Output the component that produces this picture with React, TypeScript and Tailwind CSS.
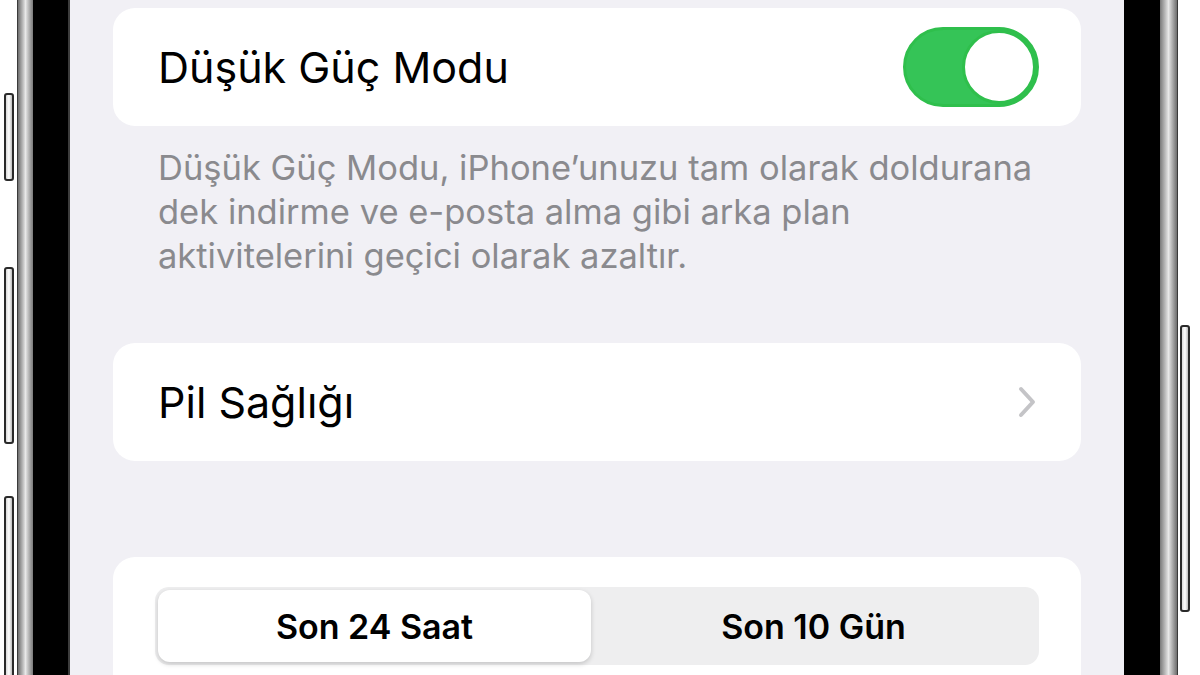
import { useState } from "react";

function SideButton({ className }: { className: string }) {
  return (
    <div
      className={`w-[10px] shrink-0 rounded-[3px] border-2 border-[#2a2a2a] bg-gradient-to-r from-[#d9d9d9] via-white to-[#bdbdbd] ${className}`}
    />
  );
}

function Toggle({ on }: { on: boolean }) {
  return (
    <div
      className={`flex h-[80px] w-[136px] items-center rounded-full border-[3px] border-[#2fbf4c] ${
        on ? "justify-end bg-[#35c457]" : "justify-start bg-[#e9e9eb]"
      }`}
    >
      <div className="h-[74px] w-[74px] rounded-full border-[3px] border-[#2fbf4c] bg-white" />
    </div>
  );
}

export default function App() {
  const [lowPower, setLowPower] = useState(true);
  const [range, setRange] = useState<"24" | "10">("24");

  return (
    <main
      className="flex h-[675px] w-[1200px] overflow-hidden bg-white"
      style={{ fontFamily: "Inter, 'Noto Sans', sans-serif" }}
    >
      {/* Left frame */}
      <div className="flex h-full shrink-0">
        <div className="flex w-[17px] flex-col pl-[4px]">
          <SideButton className="mt-[93px] h-[88px]" />
          <SideButton className="mt-[86px] h-[177px]" />
          <SideButton className="mt-[52px] h-[190px]" />
        </div>
        <div className="w-[1px] bg-[#3a3a3a]" />
        <div className="w-[15px] bg-gradient-to-r from-[#6e6e6e] via-[#e8e8e8] to-[#7a7a7a]" />
        <div className="w-[35px] bg-black" />
        <div className="w-[2px] bg-[#3c3c3c]" />
      </div>

      {/* Screen */}
      <div className="flex w-[1054px] shrink-0 flex-col bg-[#f1f0f5] px-[43px] pt-[8px] text-black">
        {/* Low power mode */}
        <div className="flex h-[118px] shrink-0 items-center justify-between rounded-[22px] bg-white pl-[45px] pr-[42px]">
          <span className="text-[43px] leading-none">Düşük Güç Modu</span>
          <button onClick={() => setLowPower(!lowPower)}>
            <Toggle on={lowPower} />
          </button>
        </div>

        <p className="mt-[20px] shrink-0 pl-[45px] text-[34.5px] leading-[44px] text-[#8a8a8e]">
          Düşük Güç Modu, iPhone’unuzu tam olarak doldurana
          <br />
          dek indirme ve e-posta alma gibi arka plan
          <br />
          aktivitelerini geçici olarak azaltır.
        </p>

        {/* Battery health */}
        <div className="mt-[65px] flex h-[118px] shrink-0 items-center justify-between rounded-[22px] bg-white pl-[45px] pr-[44px]">
          <span className="text-[43px] leading-none">Pil Sağlığı</span>
          <svg width="20" height="32" viewBox="0 0 20 32" fill="none">
            <path
              d="M4 3 L16 16 L4 29"
              stroke="#c4c4c7"
              strokeWidth="4"
              strokeLinecap="round"
              strokeLinejoin="round"
            />
          </svg>
        </div>

        {/* Usage range */}
        <div className="mt-[96px] h-[140px] shrink-0 rounded-t-[22px] bg-white px-[42px] pt-[30px]">
          <div className="flex h-[78px] rounded-[14px] bg-[#eeeeef] p-[3px]">
            <button
              onClick={() => setRange("24")}
              className={`flex w-[433px] shrink-0 items-center justify-center rounded-[12px] text-[34px] font-semibold ${
                range === "24" ? "bg-white shadow-[0_2px_5px_rgba(0,0,0,0.18)]" : ""
              }`}
            >
              Son 24 Saat
            </button>
            <button
              onClick={() => setRange("10")}
              className={`flex flex-1 items-center justify-center rounded-[12px] text-[34px] font-semibold ${
                range === "10" ? "bg-white shadow-[0_2px_5px_rgba(0,0,0,0.18)]" : ""
              }`}
            >
              Son 10 Gün
            </button>
          </div>
        </div>
      </div>

      {/* Right frame */}
      <div className="flex h-full shrink-0">
        <div className="w-[36px] bg-black" />
        <div className="w-[17px] bg-gradient-to-r from-[#7a7a7a] via-[#e8e8e8] to-[#6e6e6e]" />
        <div className="w-[1px] bg-[#3a3a3a]" />
        <div className="flex w-[22px] flex-col pl-[2px]">
          <SideButton className="mt-[325px] h-[287px]" />
        </div>
      </div>
    </main>
  );
}
